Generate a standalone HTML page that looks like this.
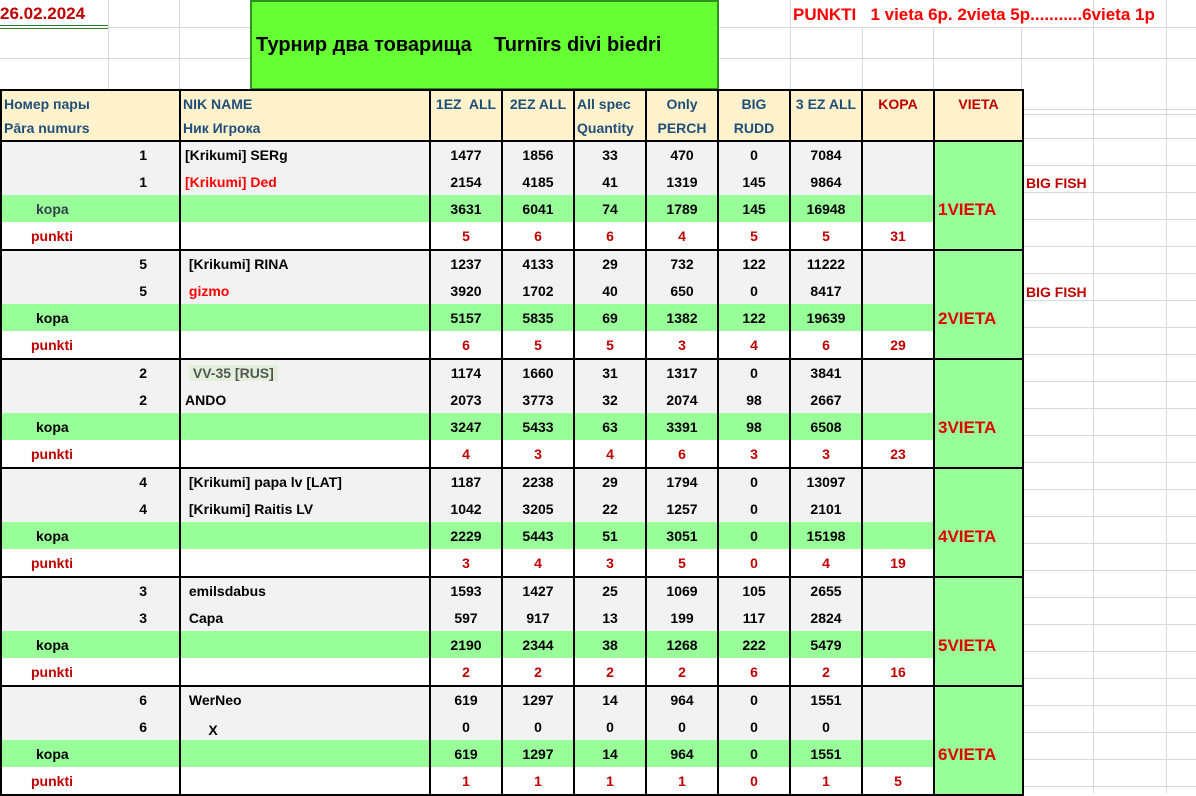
<!DOCTYPE html>
<html><head><meta charset="utf-8"><style>
*{margin:0;padding:0;box-sizing:border-box}
body{width:1196px;height:793px;background:#fff;position:relative;overflow:hidden;font-family:"Liberation Sans","DejaVu Sans",sans-serif;font-weight:bold;font-size:14px;color:#000}
.g{position:absolute;background:#d9d9d9}
.abs{position:absolute;white-space:nowrap}
table{position:absolute;border-collapse:collapse;table-layout:fixed}
#t{left:0;top:89px;width:1022px}
#t td{border-left:2px solid #000;border-right:2px solid #000;height:27px;text-align:center;white-space:nowrap;overflow:hidden;padding:0}
#t tr.h td{height:47px;background:#fff2cc;color:#1f4e79;vertical-align:top;line-height:24px;padding-top:1px;border-top:2px solid #000;border-bottom:2px solid #000}
#t tr.h td.l{text-align:left;padding-left:2px}
#t tr.h td.r{color:#c00000}
tr.a td{background:#f2f2f2}
tr.k td{background:#99ff99}
tr.p td{background:#fff;color:#c00000;height:28px!important;border-bottom:2px solid #000}
td.n{text-align:right!important;padding-right:32px!important}
td.nm{text-align:left!important;padding-left:4px!important}
td.v{background:#99ff99!important;color:#e00000;font-size:17px;text-align:left!important;padding-left:3px!important;padding-top:58px!important;vertical-align:top;border-bottom:2px solid #000}
td.kl{text-align:left!important;padding-left:34px!important}
td.pl{text-align:left!important;padding-left:29px!important;color:#c00000}
.red{color:#ff0000}
</style></head><body>
<div class="g" style="left:0;top:58px;width:250px;height:1px"></div>
<div class="g" style="left:108px;top:0;width:1px;height:89px"></div>
<div class="g" style="left:179px;top:0;width:1px;height:89px"></div>
<div class="g" style="left:719px;top:27px;width:477px;height:1px"></div>
<div class="g" style="left:719px;top:58px;width:477px;height:1px"></div>
<div class="g" style="left:108px;top:27px;width:142px;height:1px"></div>
<div class="g" style="left:790px;top:0;width:1px;height:89px"></div>
<div class="g" style="left:862px;top:27px;width:1px;height:62px"></div>
<div class="g" style="left:933px;top:27px;width:1px;height:62px"></div>
<div class="g" style="left:1021px;top:27px;width:1px;height:62px"></div>
<div class="g" style="left:1093px;top:0;width:1px;height:793px"></div>
<div class="g" style="left:1166px;top:0;width:1px;height:793px"></div>
<div class="g" style="left:1021px;top:89px;width:1px;height:704px"></div>
<div class="abs" style="left:0;top:4px;font-size:17px;color:#c00000">26.02.2024</div>
<div class="abs" style="left:0;top:25px;width:108px;height:4px;border-top:1px solid #2e7d32;border-bottom:1px solid #2e7d32"></div>
<div class="abs" style="left:250px;top:0;width:469px;height:90px;background:#66ff33;border:2px solid #2f8f1f"></div>
<div class="abs" style="left:256px;top:34px;font-size:20px">Турнир два товарища&nbsp;&nbsp;&nbsp; Turnīrs divi biedri</div>
<div class="abs" style="left:793px;top:5px;font-size:17px;color:#ff0000">PUNKTI&nbsp;&nbsp; 1 vieta 6p. 2vieta 5p...........6vieta 1p</div>
<div style="position:absolute;left:1022px;top:89px;width:174px;height:704px;background:repeating-linear-gradient(to bottom,transparent 0,transparent 26px,#d9d9d9 26px,#d9d9d9 27px);background-position:0 23px"></div>
<div class="g" style="left:1022px;top:114px;width:174px;height:1px"></div>
<div class="abs" style="left:1026px;top:175px;color:#c00000;font-size:14px">BIG FISH</div>
<div class="abs" style="left:1026px;top:284px;color:#c00000;font-size:14px">BIG FISH</div>
<table id="t">
<colgroup><col style="width:179px"><col style="width:250px"><col style="width:72px"><col style="width:72px"><col style="width:72px"><col style="width:72px"><col style="width:72px"><col style="width:72px"><col style="width:72px"><col style="width:89px"></colgroup>
<tr class="h"><td class="l">Номер пары<br>Pāra numurs</td><td class="l">NIK NAME<br>Ник Игрока</td><td>1EZ&nbsp; ALL</td><td>2EZ ALL</td><td class="l">All spec<br>Quantity</td><td>Only<br>PERCH</td><td>BIG<br>RUDD</td><td>3 EZ ALL</td><td class="r">KOPA</td><td class="r">VIETA</td></tr>

<tr class="a"><td class="n">1</td><td class="nm">[Krikumi] SERg</td><td>1477</td><td>1856</td><td>33</td><td>470</td><td>0</td><td>7084</td><td></td><td class="v" rowspan="4">1VIETA</td></tr>
<tr class="a"><td class="n">1</td><td class="nm red">[Krikumi] Ded</td><td>2154</td><td>4185</td><td>41</td><td>1319</td><td>145</td><td>9864</td><td></td></tr>
<tr class="k"><td class="kl" style="color:#333f4f">kopa</td><td></td><td>3631</td><td>6041</td><td>74</td><td>1789</td><td>145</td><td>16948</td><td></td></tr>
<tr class="p"><td class="pl">punkti</td><td></td><td>5</td><td>6</td><td>6</td><td>4</td><td>5</td><td>5</td><td>31</td></tr>

<tr class="a"><td class="n">5</td><td class="nm">&nbsp;[Krikumi] RINA</td><td>1237</td><td>4133</td><td>29</td><td>732</td><td>122</td><td>11222</td><td></td><td class="v" rowspan="4">2VIETA</td></tr>
<tr class="a"><td class="n">5</td><td class="nm red">&nbsp;gizmo</td><td>3920</td><td>1702</td><td>40</td><td>650</td><td>0</td><td>8417</td><td></td></tr>
<tr class="k"><td class="kl">kopa</td><td></td><td>5157</td><td>5835</td><td>69</td><td>1382</td><td>122</td><td>19639</td><td></td></tr>
<tr class="p"><td class="pl">punkti</td><td></td><td>6</td><td>5</td><td>5</td><td>3</td><td>4</td><td>6</td><td>29</td></tr>

<tr class="a"><td class="n">2</td><td class="nm">&nbsp;<span style="background:#e2efda;color:#555;padding:0 4px">VV-35 [RUS]</span></td><td>1174</td><td>1660</td><td>31</td><td>1317</td><td>0</td><td>3841</td><td></td><td class="v" rowspan="4">3VIETA</td></tr>
<tr class="a"><td class="n">2</td><td class="nm">ANDO</td><td>2073</td><td>3773</td><td>32</td><td>2074</td><td>98</td><td>2667</td><td></td></tr>
<tr class="k"><td class="kl">kopa</td><td></td><td>3247</td><td>5433</td><td>63</td><td>3391</td><td>98</td><td>6508</td><td></td></tr>
<tr class="p"><td class="pl">punkti</td><td></td><td>4</td><td>3</td><td>4</td><td>6</td><td>3</td><td>3</td><td>23</td></tr>

<tr class="a"><td class="n">4</td><td class="nm">&nbsp;[Krikumi] papa lv [LAT]</td><td>1187</td><td>2238</td><td>29</td><td>1794</td><td>0</td><td>13097</td><td></td><td class="v" rowspan="4">4VIETA</td></tr>
<tr class="a"><td class="n">4</td><td class="nm">&nbsp;[Krikumi] Raitis LV</td><td>1042</td><td>3205</td><td>22</td><td>1257</td><td>0</td><td>2101</td><td></td></tr>
<tr class="k"><td class="kl">kopa</td><td></td><td>2229</td><td>5443</td><td>51</td><td>3051</td><td>0</td><td>15198</td><td></td></tr>
<tr class="p"><td class="pl">punkti</td><td></td><td>3</td><td>4</td><td>3</td><td>5</td><td>0</td><td>4</td><td>19</td></tr>

<tr class="a"><td class="n">3</td><td class="nm">&nbsp;emilsdabus</td><td>1593</td><td>1427</td><td>25</td><td>1069</td><td>105</td><td>2655</td><td></td><td class="v" rowspan="4">5VIETA</td></tr>
<tr class="a"><td class="n">3</td><td class="nm">&nbsp;Capa</td><td>597</td><td>917</td><td>13</td><td>199</td><td>117</td><td>2824</td><td></td></tr>
<tr class="k"><td class="kl">kopa</td><td></td><td>2190</td><td>2344</td><td>38</td><td>1268</td><td>222</td><td>5479</td><td></td></tr>
<tr class="p"><td class="pl">punkti</td><td></td><td>2</td><td>2</td><td>2</td><td>2</td><td>6</td><td>2</td><td>16</td></tr>

<tr class="a"><td class="n">6</td><td class="nm">&nbsp;WerNeo</td><td>619</td><td>1297</td><td>14</td><td>964</td><td>0</td><td>1551</td><td></td><td class="v" rowspan="4">6VIETA</td></tr>
<tr class="a"><td class="n">6</td><td class="nm" style="padding-top:6px">&nbsp;&nbsp;&nbsp;&nbsp;&nbsp;&nbsp;X</td><td>0</td><td>0</td><td>0</td><td>0</td><td>0</td><td>0</td><td></td></tr>
<tr class="k"><td class="kl">kopa</td><td></td><td>619</td><td>1297</td><td>14</td><td>964</td><td>0</td><td>1551</td><td></td></tr>
<tr class="p"><td class="pl">punkti</td><td></td><td>1</td><td>1</td><td>1</td><td>1</td><td>0</td><td>1</td><td>5</td></tr>
</table>
</body></html>
